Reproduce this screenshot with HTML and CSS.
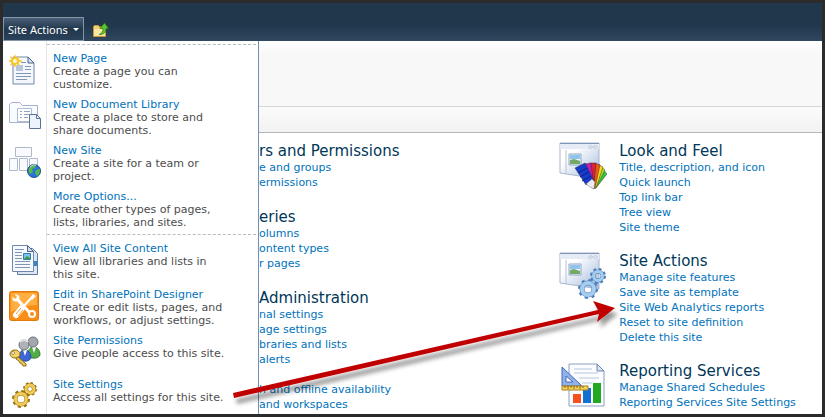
FILE: index.html
```html
<!DOCTYPE html>
<html lang="en">
<head>
  <meta charset="UTF-8">
  <meta name="viewport" content="width=device-width, initial-scale=1.0">
  <title>Site Settings</title>
  <link rel="stylesheet" href="styles.css">
</head>

<body>
  <header class="topbar">
    <button type="button" class="site-actions">Site Actions<span class="caret"></span></button>
    <a href="#" class="navigate-up" aria-label="Navigate up">
      <svg width="16" height="16" viewBox="0 0 16 16">
        <path d="M.5 4.500l1-1h4l1 1.500h6v9.500H.5z" fill="#f3cf75" stroke="#c9973a" />
        <path d="M1 7h11v7H1z" fill="#fbe5a3" />
        <path d="M6 12.500c3-1 4-3 4-6H7L11.500 1l4 5.500H13c0 4-2 6-7 6z" fill="#5cc42d" stroke="#27821a" stroke-width=".7" />
      </svg>
    </a>
  </header>

  <main class="page">
    <div class="title-area"></div>
    <div class="tab-row"></div>

    <div class="settings">
      <div class="column column-left">
        <section class="group">
          <h2>rs and Permissions</h2>
          <ul>
            <li><a href="#">e and groups</a></li>
            <li><a href="#">ermissions</a></li>
          </ul>
        </section>
        <section class="group">
          <h2>eries</h2>
          <ul>
            <li><a href="#">olumns</a></li>
            <li><a href="#">ontent types</a></li>
            <li><a href="#">r pages</a></li>
          </ul>
        </section>
        <section class="group">
          <h2>Administration</h2>
          <ul>
            <li><a href="#">nal settings</a></li>
            <li><a href="#">age settings</a></li>
            <li><a href="#">braries and lists</a></li>
            <li><a href="#">alerts</a></li>
            <li class="skip"><a href="#">h and offline availability</a></li>
            <li><a href="#">and workspaces</a></li>
          </ul>
        </section>
      </div>

      <div class="column column-right">
        <section class="group with-icon">
          <svg width="48" height="48" viewBox="0 0 48 48">
            <defs>
              <linearGradient id="win" x1="0" y1="0" x2="1" y2="1">
                <stop offset=".3" stop-color="#fff" />
                <stop offset="1" stop-color="#9fb8dc" />
              </linearGradient>
            </defs>
            <path d="M1 1h39v36L1 31z" fill="url(#win)" stroke="#a9b7cf" />
            <path d="M1 1h39v6H1z" fill="#e6ecf5" />
            <path d="M1 1.500h39" stroke="#8094b8" />
            <path d="M30 4h3v2h-3zM35 4h3v2h-3z" fill="#fff" stroke="#9babc6" stroke-width=".6" />
            <path d="M7 8v24" stroke="#b6c3d8" />
            <path d="M10 12h12v11H10z" fill="#eff5fb" stroke="#8fa5c5" />
            <path d="M11 13h10v4H11z" fill="#8fc5ec" />
            <path d="M11 18l4-1 6 2v3H11z" fill="#73a866" />
            <g stroke="#222" stroke-width=".4">
              <path d="M34 46L44 27l4 5-11 14z" fill="#2fc747" />
              <path d="M34 46L42 24l4 4-9 18z" fill="#a4dc22" />
              <path d="M34 46L39 22l5 3-7 21z" fill="#f4d81d" />
              <path d="M34 46L36 21l5 2-5 23z" fill="#ef5a1d" />
              <path d="M33 46L31 21l6 0-2 24z" fill="#d92437" />
              <path d="M32 45L26 22l6-1 3 24z" fill="#c21fae" />
              <path d="M16 26l10-5 9 18-8 4z" fill="#173cc9" />
              <path d="M27 42l6-5 3 3-1 7-4-2z" fill="#e9ecf1" stroke="#555" />
            </g>
            <path d="M19 31l9-5M21 35l9-5M23 39l9-5" stroke="#0a218a" />
          </svg>
          <div>
            <h2>Look and Feel</h2>
            <ul>
              <li><a href="#">Title, description, and icon</a></li>
              <li><a href="#">Quick launch</a></li>
              <li><a href="#">Top link bar</a></li>
              <li><a href="#">Tree view</a></li>
              <li><a href="#">Site theme</a></li>
            </ul>
          </div>
        </section>
        <section class="group with-icon">
          <svg width="48" height="48" viewBox="0 0 48 48">
            <path d="M1 1h39v36L1 31z" fill="url(#win)" stroke="#a9b7cf" />
            <path d="M1 1h39v6H1z" fill="#e6ecf5" />
            <path d="M1 1.500h39" stroke="#8094b8" />
            <path d="M30 4h3v2h-3zM35 4h3v2h-3z" fill="#fff" stroke="#9babc6" stroke-width=".6" />
            <path d="M7 8v24" stroke="#b6c3d8" />
            <path d="M10 12h12v11H10z" fill="#eff5fb" stroke="#8fa5c5" />
            <path d="M11 13h10v4H11z" fill="#8fc5ec" />
            <path d="M11 18l4-1 6 2v3H11z" fill="#73a866" />
            <g fill="none">
              <circle cx="39" cy="24" r="6.500" stroke="#4b7fb8" stroke-width="3" stroke-dasharray="2.600 2.500" />
              <circle cx="39" cy="24" r="4.500" stroke="#4b7fb8" stroke-width="4" />
              <circle cx="39" cy="24" r="4.500" stroke="#a5cdf0" stroke-width="3" />
              <circle cx="29" cy="37" r="8.500" stroke="#4b7fb8" stroke-width="3" stroke-dasharray="3 3.700" />
              <circle cx="29" cy="37" r="6" stroke="#4b7fb8" stroke-width="5" />
              <circle cx="29" cy="37" r="6" stroke="#a5cdf0" stroke-width="4" />
            </g>
          </svg>
          <div>
            <h2>Site Actions</h2>
            <ul>
              <li><a href="#">Manage site features</a></li>
              <li><a href="#">Save site as template</a></li>
              <li><a href="#">Site Web Analytics reports</a></li>
              <li><a href="#">Reset to site definition</a></li>
              <li><a href="#">Delete this site</a></li>
            </ul>
          </div>
        </section>
        <section class="group with-icon">
          <svg width="48" height="48" viewBox="0 0 48 48">
            <path d="M10 2h28l7 7v35H10z" fill="#fafcff" stroke="#8b9fc0" />
            <path d="M38 2v7h7z" fill="#dbe5f3" stroke="#6e85ac" />
            <path d="M15 7h18M15 11h24M20 16h20M23 21h10" stroke="#b9c7dc" />
            <path d="M14 32h8v9h-8z" fill="#f4511e" />
            <path d="M24 26h8v15h-8z" fill="#1272d4" />
            <path d="M34 21h8v20h-8z" fill="#22a81f" />
            <path d="M3 5v19h20z" fill="#8fb2ea" stroke="#4569b5" />
            <path d="M7 14v6h7z" fill="#fff" stroke="#4569b5" />
            <path d="M3 24h26v4H3z" fill="#f6d45b" stroke="#a8801f" />
            <path d="M6 24v2M9 24v3M12 24v2M15 24v3M18 24v2M21 24v3M24 24v2" stroke="#8a6513" />
          </svg>
          <div>
            <h2>Reporting Services</h2>
            <ul>
              <li><a href="#">Manage Shared Schedules</a></li>
              <li><a href="#">Reporting Services Site Settings</a></li>
            </ul>
          </div>
        </section>
      </div>
    </div>
  </main>

  <nav class="menu" aria-label="Site Actions">
    <hr>
    <a href="#" class="item">
      <svg width="32" height="32" viewBox="0 0 32 32">
        <path d="M4 3h15l6 6v21H4z" fill="#f4f8fd" stroke="#7188ab" />
        <path d="M19 3v6h6z" fill="#d7e2f1" stroke="#4d658c" />
        <path d="M7 11h7v6H7z" fill="#b9c6dc" />
        <path d="M16 12.500h6M16 15.500h6M7 19.500h15M7 22.500h15M7 25.500h11M12 8.500h5" stroke="#8195b5" />
        <path d="M6 0l1.500 4L11 2 9.500 5.500 14 7l-4.500 1.500L11 12 7.500 10 6 14 4.500 10 1 12l1.500-3.500L-1 7l3.500-1.500L1 2l3.500 2z" fill="#fbc62b" />
        <circle cx="6" cy="7" r="2" fill="#fffbdc" />
      </svg>
      <span class="label"><span class="name">New Page</span><span class="desc">Create a page you can customize.</span></span>
    </a>
    <a href="#" class="item">
      <svg width="32" height="32" viewBox="0 0 32 32">
        <path d="M.5 22.500v-18l2-2h8l3 3h15v17z" fill="#f9fbfe" stroke="#a6b3cb" />
        <path d="M8.500 8.500h14v13h-14z" fill="#fff" stroke="#b0bdd3" />
        <path d="M11 11.500h2M15 11.500h6M11 14.500h2M15 14.500h5M11 17.500h2M15 17.500h4" stroke="#8fa4c8" />
        <path d="M20.500 14.500h7l4 4v10h-11z" fill="#edf3fa" stroke="#5b7296" />
        <path d="M27.500 14.500v4h4" fill="none" stroke="#5b7296" />
      </svg>
      <span class="label"><span class="name">New Document Library</span><span class="desc">Create a place to store and share documents.</span></span>
    </a>
    <a href="#" class="item">
      <svg width="32" height="32" viewBox="0 0 32 32">
        <path d="M6.500 1.500h16v9h-16zM.5 12.500h8v12h-8zM10.500 12.500h8v12h-8zM20.500 12.500h8v12h-8z" fill="#f8fafd" stroke="#b0bacd" />
        <circle cx="25" cy="25" r="6.500" fill="#2874d8" stroke="#244e8c" />
        <path d="M20 22c2-3 5-4 7-3l-1 3-3 1 1 3-3 2c-1-2-2-3-1-6zM27 24l4-1c0 3-1 6-3 7l-2-3z" fill="#58b847" />
        <path d="M21 21q3-3 6-2" stroke="#bfe2ff" fill="none" />
      </svg>
      <span class="label"><span class="name">New Site</span><span class="desc">Create a site for a team or project.</span></span>
    </a>
    <a href="#" class="item">
      <span class="no-icon"></span>
      <span class="label"><span class="name">More Options...</span><span class="desc">Create other types of pages, lists, libraries, and sites.</span></span>
    </a>
    <hr>
    <a href="#" class="item">
      <svg width="32" height="32" viewBox="0 0 32 32">
        <path d="M8.500 4.500h15l5 5v21h-20z" fill="#dbe7f5" stroke="#60799f" />
        <path d="M24 17h4v5h-4z" fill="#3286c8" />
        <path d="M3.500 1.500h15l6 6v20h-21z" fill="#f6f9fd" stroke="#7188ab" />
        <path d="M18.500 1.500v6h6z" fill="#d3dfef" stroke="#4d658c" />
        <path d="M6 5.500h9M6 8.500h7M6 11.500h7M6 14.500h7M6 17.500h15M6 20.500h15M6 23.500h15" stroke="#8195b5" />
        <path d="M14.500 9.500h7v6h-7z" fill="#79c3ef" stroke="#327fae" />
        <path d="M15 15l3-3 3 2v1z" fill="#43993f" />
      </svg>
      <span class="label"><span class="name">View All Site Content</span><span class="desc">View all libraries and lists in this site.</span></span>
    </a>
    <a href="#" class="item">
      <svg width="32" height="32" viewBox="0 0 32 32">
        <rect x=".5" y="1.500" width="29" height="29" rx="2" fill="#f98d16" stroke="#e2790d" />
        <path d="M2 3h26v12Q15 15 2 22z" fill="#ffae42" />
        <path d="M7 8l15 16" stroke="#fff" stroke-width="3" />
        <circle cx="7" cy="8" r="3.500" fill="#fff" />
        <path d="M3 4l4 4" stroke="#ffa733" stroke-width="3" />
        <circle cx="23" cy="24" r="3" fill="#f98d16" stroke="#fff" stroke-width="2" />
        <path d="M25 5L13 18" stroke="#fff" stroke-width="2" />
        <path d="M24 4l3 2-4 4-2-2z" fill="#fff" />
        <path d="M13 18l-6 7" stroke="#fff" stroke-width="6" stroke-linecap="round" />
        <path d="M12 18l-5 6M14 20l-5 6" stroke="#ef9b3b" />
      </svg>
      <span class="label"><span class="name">Edit in SharePoint Designer</span><span class="desc">Create or edit lists, pages, and workflows, or adjust settings.</span></span>
    </a>
    <a href="#" class="item short">
      <svg width="32" height="32" viewBox="0 0 32 32">
        <path d="M19 20c0-8 3-9 6-9s6 3 6 8c-2 4-8 4-12 1z" fill="#52ad48" stroke="#347c2e" />
        <path d="M23 11l2 6 2-6z" fill="#fff" />
        <circle cx="24" cy="6" r="5" fill="#a4a7ad" stroke="#6f7278" />
        <path d="M10 23c0-8 3-9 6-9s6 3 6 8c-2 4-8 4-12 1z" fill="#3b66d4" stroke="#2748a0" />
        <path d="M14 14l2 6 2-6z" fill="#fff" />
        <circle cx="15" cy="9" r="5" fill="#aeb1b7" stroke="#6f7278" />
        <path d="M11 6q4-4 8 0" fill="none" stroke="#dfe1e4" stroke-width="2" />
        <path d="M8 20l9 8v2h-3l-1-2-2-1-1-2-3-2z" fill="#f0c84a" stroke="#8d6b18" />
        <ellipse cx="6" cy="18" rx="5" ry="4" fill="#f3d567" stroke="#8d6b18" />
        <circle cx="4" cy="17" r="1.500" fill="#fff" stroke="#8d6b18" stroke-width=".7" />
      </svg>
      <span class="label"><span class="name">Site Permissions</span><span class="desc">Give people access to this site.</span></span>
    </a>
    <a href="#" class="item short">
      <svg width="32" height="32" viewBox="0 0 32 32">
        <g fill="none">
          <circle cx="21" cy="9" r="5.500" stroke="#9a7417" stroke-width="3" stroke-dasharray="2.200 2.100" />
          <circle cx="21" cy="9" r="4" stroke="#9a7417" stroke-width="4" />
          <circle cx="21" cy="9" r="4" stroke="#f0cb55" stroke-width="3" />
          <circle cx="12" cy="19" r="7.500" stroke="#9a7417" stroke-width="3" stroke-dasharray="3 2.900" />
          <circle cx="12" cy="19" r="5.500" stroke="#9a7417" stroke-width="4" />
          <circle cx="12" cy="19" r="5.500" stroke="#f0cb55" stroke-width="3" />
        </g>
      </svg>
      <span class="label"><span class="name">Site Settings</span><span class="desc">Access all settings for this site.</span></span>
    </a>
  </nav>

  <!-- arrow from Site Settings to the analytics link -->
  <svg class="arrow" width="390" height="110" viewBox="0 0 390 110">
    <defs>
      <filter id="shadow" x="-5%" y="-10%" width="110%" height="130%">
        <feDropShadow dx="3" dy="6" stdDeviation="2" flood-color="#000" flood-opacity=".4" />
      </filter>
    </defs>
    <path d="M3 92L368 9 363 0 385 7 367 21 369 13 4 97z" fill="#c00000" filter="url(#shadow)" />
  </svg>
</body>

</html>
```
FILE: styles.css
```css
* {
  box-sizing: border-box;
}

body {
  margin: 0;
  height: 100vh;
  position: relative;
  overflow: hidden;
  display: flex;
  flex-direction: column;
  border: 3px solid #2b2b2b;
  background: #fff;
  font-family: Verdana, "DejaVu Sans", sans-serif;
  font-size: 11px;
}

a {
  color: #0072bc;
  text-decoration: none;
}

.topbar {
  display: flex;
  align-items: flex-end;
  gap: 9px;
  height: 38px;
  flex: none;
  background: linear-gradient(#21374c 60%, #30475f);
}

.site-actions {
  display: flex;
  align-items: center;
  gap: 5px;
  height: 24px;
  padding: 0 4px;
  border: 1px solid #8495a8;
  background: linear-gradient(#4a6079, #21374c 50%, #2a425b);
  color: #fff;
  font-family: "Noto Sans", sans-serif;
  font-size: 11px;
}

.caret {
  border: 3px solid transparent;
  border-top-color: #fff;
  border-bottom: 0;
}

.navigate-up svg {
  display: block;
  margin-bottom: 3px;
}

.page {
  flex: 1;
  min-height: 0;
  overflow: hidden;
}

.title-area {
  height: 66px;
  background: linear-gradient(#fff, #f8f8f8 20%);
  border-bottom: 1px solid #d5d6d8;
}

.tab-row {
  height: 26px;
  background: linear-gradient(#fbfbfb, #f2f2f2);
  border-bottom: 1px solid #b4b6ba;
}

.settings {
  display: grid;
  grid-template-columns: 8fr 7fr;
  padding: 9px 0 0 256px;
}

.column {
  display: flex;
  flex-direction: column;
  gap: 17px;
}

.column-left {
  gap: 18px;
}

h2 {
  margin: 0;
  color: #003759;
  font-size: 15px;
  font-weight: normal;
  line-height: 18px;
  white-space: nowrap;
}

ul {
  margin: 0;
  padding: 0;
  list-style: none;
}

li {
  line-height: 15px;
  white-space: nowrap;
}

.skip {
  margin-top: 15px;
}

.with-icon {
  display: flex;
  gap: 12px;
}

.with-icon svg {
  flex: none;
}

.menu {
  position: absolute;
  top: 38px;
  bottom: 0;
  left: 0;
  width: 256px;
  overflow: hidden;
  background: linear-gradient(to right, #fff 43px, #e1e3e6 43px, #e1e3e6 44px, #fff 44px);
  border-right: 1px solid #6b93b5;
}

.menu hr {
  height: 0;
  margin: 3px 2px 2px 44px;
  border: 0;
  border-top: 1px dashed #b9bcc0;
}

.item {
  display: flex;
  gap: 12px;
  padding-left: 6px;
  height: 46px;
}

.item svg,
.no-icon {
  flex: none;
  width: 32px;
}

.item svg {
  margin-top: 7px;
}

.label {
  padding-top: 5px;
  line-height: 13px;
}

.name,
.desc {
  display: block;
}

.desc {
  width: 174px;
  color: #4c4c4c;
}

.short {
  height: 44px;
}

.arrow {
  position: absolute;
  left: 227px;
  top: 298px;
  overflow: visible;
  pointer-events: none;
}
```
